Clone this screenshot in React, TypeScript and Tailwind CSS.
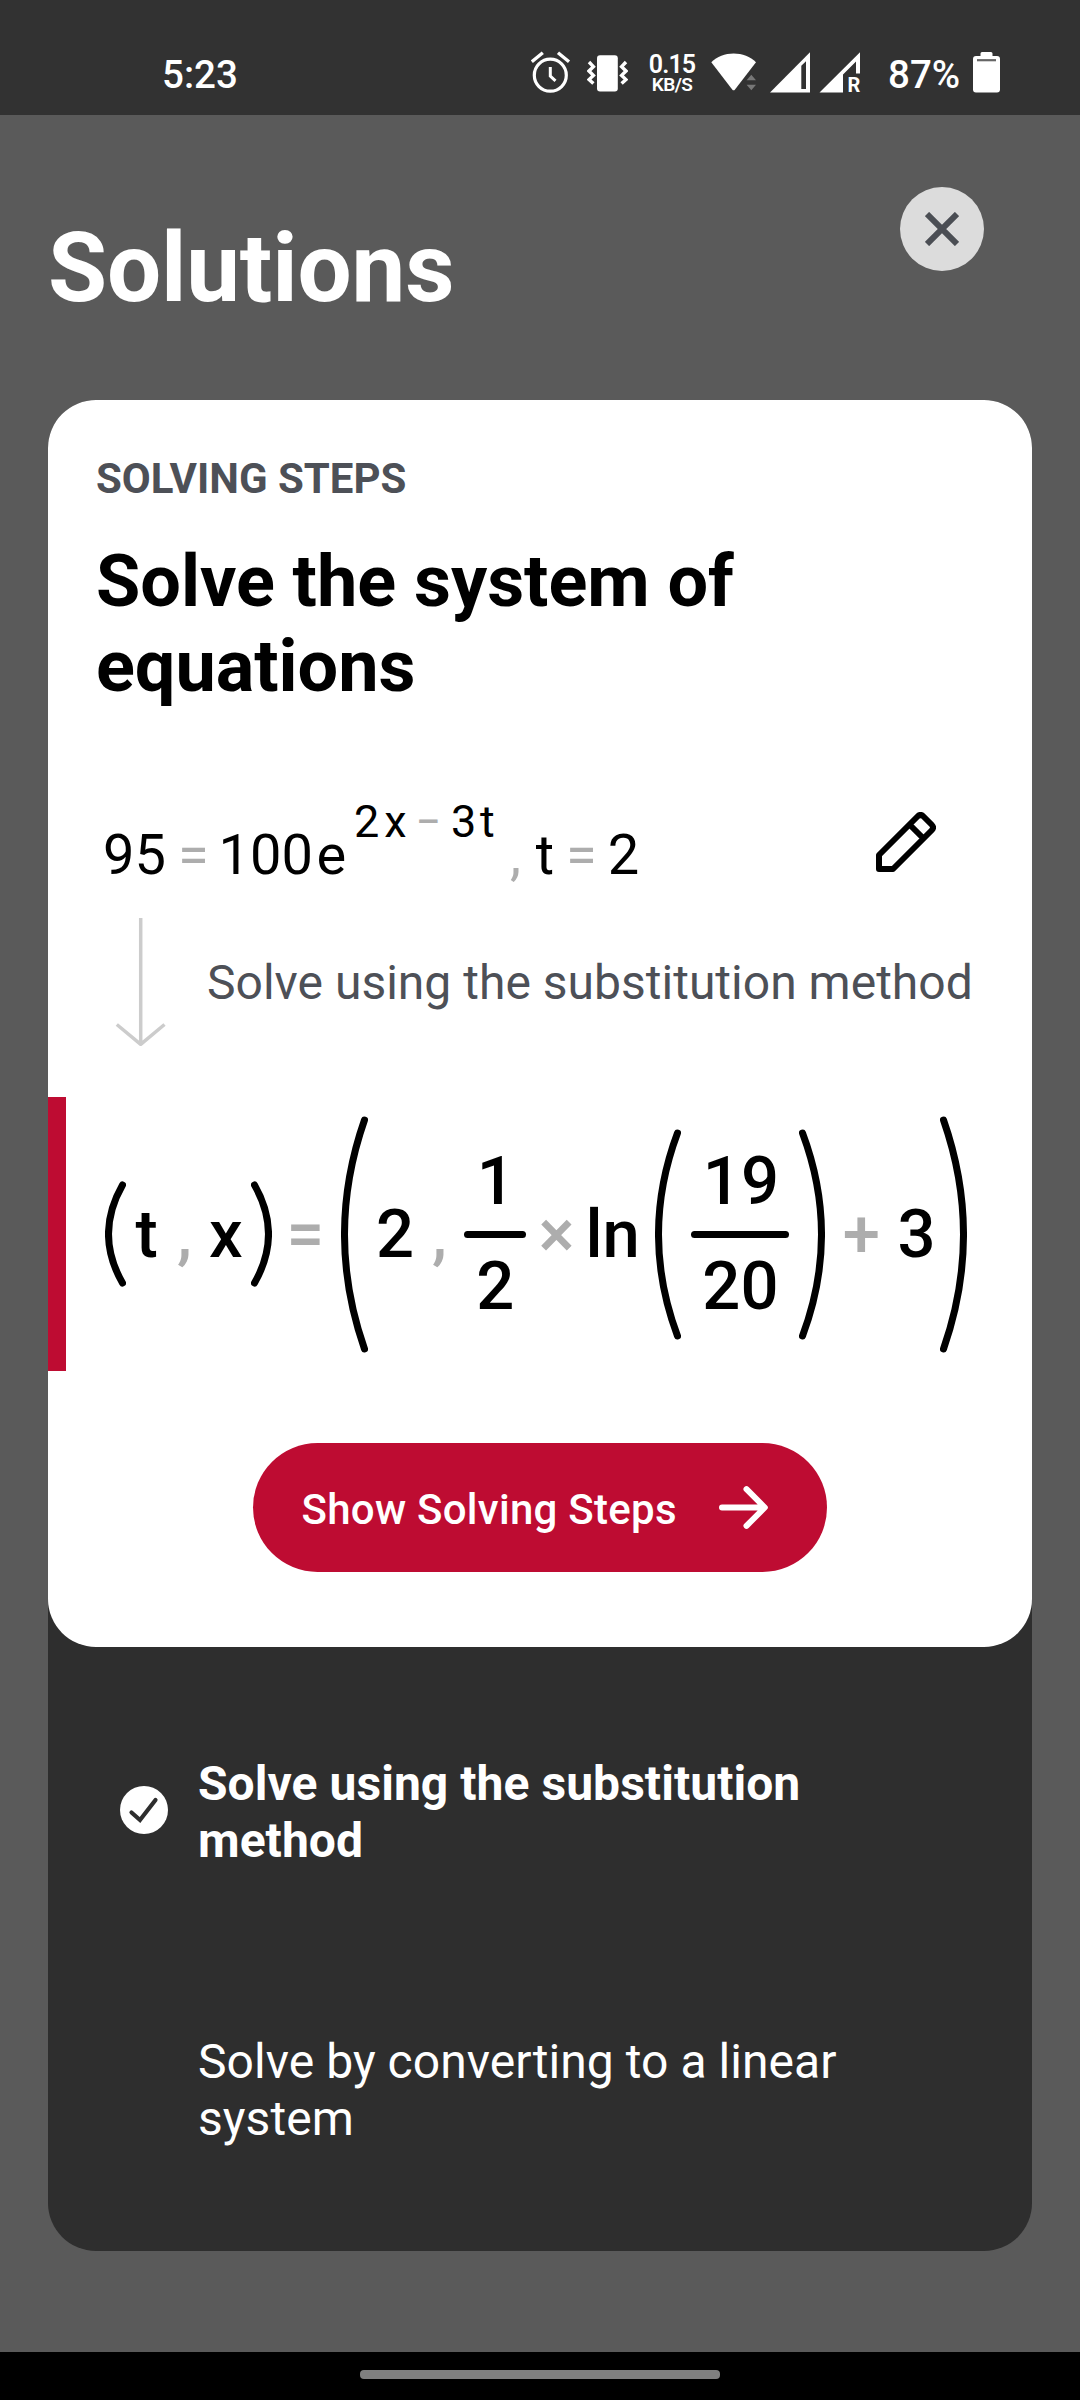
import React from "react";

function StatusBar() {
  return (
    <header className="flex h-[115px] w-full shrink-0 items-start bg-[#323232] text-white">
      <span className="ml-[162px] mt-[52px] w-[369px] text-[38.5px] font-medium leading-[45px]">5:23</span>
      {/* alarm */}
      <svg className="mt-[51px] shrink-0" width="40" height="43" viewBox="0 0 40 43" fill="none" stroke="#fff">
        <circle cx="19.3" cy="24.2" r="16" strokeWidth="3.2" />
        <path d="M.8 10.8 11.8 1.8M38 10.8 27 1.8" strokeWidth="3.4" />
        <path d="M19.3 16v9l5.2 4.8" strokeWidth="3" />
      </svg>
      {/* vibrate */}
      <svg className="ml-[16px] mt-[51px] shrink-0" width="41" height="43" viewBox="0 0 41 43" fill="none" stroke="#fff" strokeWidth="3.4">
        <rect x="10" y="4.2" width="20.8" height="36.2" rx="3" fill="#fff" stroke="none" />
        <path d="M2 11 6.4 15.6 2 20 6.4 24.4 2 28.6 6.4 32.6M39 11 34.6 15.6 39 20 34.6 24.4 39 28.6 34.6 32.6" />
      </svg>
      <div className="mt-[52px] flex w-[88px] shrink-0 flex-col items-center text-center">
        <span className="text-[25px] font-semibold leading-[25px] tracking-[-0.9px]">0.15</span>
        <span className="text-[19px] font-semibold leading-[15px] tracking-[-0.6px]">KB/S</span>
      </div>
      {/* wifi */}
      <svg className="-ml-[5px] mt-[51px] shrink-0" width="46" height="43" viewBox="0 0 46 43" fill="#fff">
        <path d="M.3 11.2C6 5.6 14 2.4 22.6 2.4S39.4 5.6 45 11.2L24 38.4Q22.6 40.2 21.2 38.4Z" />
        <path d="M35.6 29.2 40.3 23.8 45 29.2ZM35.6 33.8 40.3 39.2 45 33.8Z" fill="#777" />
      </svg>
      {/* signal, sim 1 */}
      <svg className="ml-[13px] mt-[52px] shrink-0" width="40" height="41" viewBox="0 0 40 41">
        <path d="M0 40.6 40 .3V40.6Z" fill="#fff" />
        <path d="M31.3 13.8 36 9.2V37H31.3Z" fill="#323232" />
      </svg>
      {/* signal, sim 2 */}
      <div className="relative ml-[9px] mt-[52px] h-[41px] w-[42px] shrink-0">
        <svg width="42" height="41" viewBox="0 0 42 41">
          <path d="M.5 40.6 41 .3V21.6H37V9.5L24 22.5V40.6Z" fill="#fff" />
        </svg>
        <span className="absolute left-[28.5px] top-[23px] text-[20px] font-bold leading-[21px]">R</span>
      </div>
      <span className="ml-[27px] mt-[52px] w-[85px] text-[38.5px] font-medium leading-[45px]">87%</span>
      {/* battery */}
      <svg className="mt-[52px] shrink-0" width="27" height="41" viewBox="0 0 27 41">
        <path d="M9 0h9q1.5 0 1.5 1.5V4H24q3 0 3 3v30.6q0 3-3 3H3q-3 0-3-3V7q0-3 3-3H7.5V1.5Q7.5 0 9 0Z" fill="#fff" />
        <path d="M4 8.2H23" stroke="#666" strokeWidth="2.2" />
      </svg>
    </header>
  );
}

/* Bracket whose arc bulges by `bulge` px at mid-height. */
function Paren({ h, bulge, right = false, className = "" }: { h: number; bulge: number; right?: boolean; className?: string }) {
  const w = bulge + 7;
  const end = right ? 3.5 : w - 3.5;
  const ctrl = right ? 3.5 + 2 * bulge : w - 3.5 - 2 * bulge;
  return (
    <svg className={"shrink-0 " + className} width={w} height={h} viewBox={`0 0 ${w} ${h}`}>
      <path d={`M${end} 4Q${ctrl} ${h / 2} ${end} ${h - 4}`} fill="none" stroke="#000" strokeWidth="7" strokeLinecap="round" />
    </svg>
  );
}

function Tok({ children, className }: { children: React.ReactNode; className: string }) {
  return <span className={"block shrink-0 whitespace-nowrap " + className}>{children}</span>;
}

function Fraction({ top, bottom, className }: { top: string; bottom: string; className: string }) {
  return (
    <div className={"flex shrink-0 flex-col items-center " + className}>
      <span className="pl-[2px]">{top}</span>
      <span className="my-[15.5px] h-[7px] w-full rounded-full bg-black" />
      <span className="pl-[1px]">{bottom}</span>
    </div>
  );
}

function Problem() {
  return (
    <div className="flex h-[119px] items-start text-[56px] leading-[56px] text-black">
      <div className="flex w-[774px] pt-[28px]">
        <Tok className="w-[76px] pl-[1px]">95</Tok>
        <Tok className="w-[40px] text-[#adadad]">=</Tok>
        <Tok className="w-[98.5px] pl-[0.5px]">100</Tok>
        <Tok className="w-[37.5px]">e</Tok>
        <div className="-mt-[28px] flex h-[45px] w-[156px] text-[45px] leading-[45px]">
          <Tok className="w-[30.3px]">2</Tok>
          <Tok className="w-[30.7px]">x</Tok>
          <Tok className="w-[36px] pl-[0.5px] text-[#adadad]">−</Tok>
          <Tok className="w-[29px]">3</Tok>
          <Tok className="w-[30px]">t</Tok>
        </div>
        <Tok className="w-[25.7px] text-[#adadad]">,</Tok>
        <Tok className="w-[30.3px]">t</Tok>
        <Tok className="w-[41.7px] text-[#adadad]">=</Tok>
        <Tok className="w-[32px]">2</Tok>
      </div>
      <svg className="mt-[13px] shrink-0" width="60" height="60" viewBox="0 0 60 60" fill="none" stroke="#000" strokeWidth="6" strokeLinejoin="round">
        <path d="M3 57V43L41.5 4.5Q44.5 1.5 47.5 4.5L55.5 12.5Q58.5 15.5 55.5 18.5L17 57ZM34.5 13.5 46.5 25.5" />
      </svg>
    </div>
  );
}

function Result() {
  return (
    <div className="flex h-[274px] items-center text-[67px] font-medium leading-[67px] text-black">
      <div className="h-full w-[18px] shrink-0 bg-[#be0c32]" />
      <Paren h={106} bulge={14} className="ml-[39px]" />
      <Tok className="ml-[9.5px] w-[41.5px]">t</Tok>
      <Tok className="w-[32px] text-[#adadad]">,</Tok>
      <Tok className="w-[41.7px]">x</Tok>
      <Paren h={106} bulge={14} right />
      <Tok className="ml-[14.8px] w-[54.7px] text-[#adadad]">=</Tok>
      <Paren h={237} bulge={20} />
      <Tok className="ml-[7.8px] w-[56px]">2</Tok>
      <Tok className="w-[32px] text-[#adadad]">,</Tok>
      <Fraction top="1" bottom="2" className="w-[61.7px]" />
      <Tok className="ml-[13px] w-[46.9px] text-[#adadad]">×</Tok>
      <Tok className="w-[69.6px]">ln</Tok>
      <Paren h={211} bulge={19} />
      <Fraction top="19" bottom="20" className="ml-[9.8px] w-[98px]" />
      <Paren h={211} bulge={19} right className="ml-[10.2px]" />
      <Tok className="ml-[17.6px] w-[53.7px] text-[#adadad]">+</Tok>
      <Tok className="w-[44px] pl-[1px]">3</Tok>
      <Paren h={237} bulge={20} right />
    </div>
  );
}

export default function App() {
  return (
    <div className="flex h-[2400px] w-[1080px] flex-col overflow-hidden bg-[#5a5a5a] font-['Roboto',sans-serif]">
      <StatusBar />
      <main className="h-[2237px] px-[48px]">
        <div className="flex h-[285px] justify-between">
          <h1 className="mt-[97px] text-[96px] font-bold leading-[112px] tracking-[-0.15px] text-white">Solutions</h1>
          <button className="mr-[48px] mt-[72px] flex h-[84px] w-[84px] items-center justify-center rounded-full bg-[#dcdcdc]">
            <svg width="34" height="34" viewBox="0 0 34 34" fill="none" stroke="#4b4e54" strokeWidth="6">
              <path d="M2 2 32 32M32 2 2 32" />
            </svg>
          </button>
        </div>
        <section className="h-[1851px] rounded-[48px] bg-[#2e2e2e]">
          <div className="h-[1247px] rounded-[48px] bg-white pt-[55px]">
            <p className="pl-[48px] text-[42px] font-bold leading-[48px] text-[#4d5057]">SOLVING STEPS</p>
            <h2 className="mt-[36px] w-[760px] pl-[48px] text-[72px] font-bold leading-[85px] tracking-[-0.03px] text-black">
              Solve the system of equations
            </h2>
            <div className="mt-[90px] pl-[54px]">
              <Problem />
            </div>
            <div className="flex h-[179px] pl-[66px]">
              <svg className="shrink-0" width="53" height="130" viewBox="0 0 53 130" fill="none" stroke="#ccc" strokeWidth="3.5">
                <path d="M26.7 0V126M2.8 106.5 26.7 126.3 50.5 106.5" strokeLinejoin="round" />
              </svg>
              <p className="ml-[40px] mt-[36px] whitespace-nowrap text-[48px] leading-[57px] tracking-[0.01px] text-[#4d5057]">
                Solve using the substitution method
              </p>
            </div>
            <Result />
            <button className="ml-[205px] mt-[72px] flex h-[129px] w-[574px] items-center rounded-full bg-[#be0c32] pl-[48.5px] text-white">
              <span className="mt-[4px] w-[417.5px] whitespace-nowrap text-left text-[42px] font-medium leading-[48px] tracking-[0.27px]">Show Solving Steps</span>
              <svg width="49" height="43" viewBox="0 0 49 43" fill="none" stroke="#fff" strokeWidth="6" strokeLinecap="round" strokeLinejoin="round">
                <path d="M3 21.5H45.5M27.5 3.2 45.8 21.5 27.5 39.8" />
              </svg>
            </button>
          </div>
          <div className="flex pl-[72px] pt-[108px] text-[48px] leading-[57px] tracking-[0.05px] text-white">
            <svg className="mt-[31px] shrink-0" width="48" height="48" viewBox="0 0 48 48">
              <circle cx="24" cy="24" r="24" fill="#fff" />
              <path d="M11.5 26.5 20 34 35.5 14" fill="none" stroke="#2e2e2e" strokeWidth="4.2" strokeLinecap="round" strokeLinejoin="miter" />
            </svg>
            <div className="ml-[30px] w-[680px]">
              <p className="font-bold">Solve using the substitution method</p>
              <p className="mt-[164px]">Solve by converting to a linear system</p>
            </div>
          </div>
        </section>
      </main>
      <footer className="flex h-[48px] justify-center bg-black pt-[18px]">
        <div className="h-[9px] w-[360px] rounded-[4px] bg-[#808080]" />
      </footer>
    </div>
  );
}
